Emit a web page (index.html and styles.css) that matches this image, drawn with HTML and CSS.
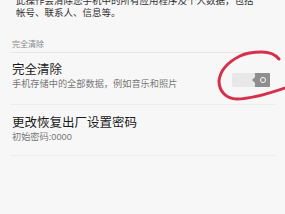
FILE: index.html
```html
<!DOCTYPE html>
<html lang="zh">
<head>
<meta charset="utf-8">
<link rel="stylesheet" href="styles.css">
</head>
<body>
<div class="page">
  <p class="intro">此操作会清除您手机中的所有应用程序及个人数据，包括帐号、联系人、信息等。</p>
  <div class="section-head">完全清除</div>
  <div class="row first">
    <div class="row-text">
      <div class="title">完全清除</div>
      <div class="sub">手机存储中的全部数据，例如音乐和照片</div>
    </div>
    <div class="switch">
      <span class="track"></span>
      <span class="thumb"><span class="dot"></span></span>
    </div>
  </div>
  <div class="row">
    <div class="row-text">
      <div class="title">更改恢复出厂设置密码</div>
      <div class="sub">初始密码:0000</div>
    </div>
  </div>
  <svg class="mark" width="75" height="60" viewBox="0 0 75 60">
    <path d="M69 14 C64 8 58 7 52 7 C44 7 36 8 30 11 C18 17 10 26 9 36 C9 46 16 54 27 54 C40 54 55 50 78 42" fill="none" stroke="#d6304b" stroke-width="3" stroke-linecap="round"/>
  </svg>
</div>
</body>
</html>
```
FILE: styles.css
```css
html, body {
  margin: 0;
  padding: 0;
  background: #f7f7f7;
  overflow: hidden;
}
.page {
  position: relative;
  width: 285px;
  height: 214px;
  font-family: "Liberation Sans", "Noto Sans CJK SC", sans-serif;
  color: #222;
}
.intro {
  margin: -5px 0 0 0;
  padding: 0 29px 0 16px;
  font-size: 9.5px;
  line-height: 12px;
  color: #333;
}
.section-head {
  margin: 21px 10px 0 10px;
  padding: 0 0 2px 2px;
  font-size: 8px;
  line-height: 10px;
  color: #888;
  border-bottom: 1px solid #e6e6e6;
}
.row {
  box-sizing: border-box;
  margin: 0 10px;
  padding: 10px 0 0 2px;
  height: 52px;
  display: flex;
  align-items: flex-start;
  justify-content: space-between;
  border-bottom: 1px solid #ececec;
}
.row + .row {
  padding-top: 11px;
  height: 51px;
}
.title {
  font-size: 12.5px;
  line-height: 15px;
  color: #1a1a1a;
}
.sub {
  font-size: 9.2px;
  line-height: 12px;
  color: #777;
}
.switch {
  display: flex;
  align-items: center;
  margin: 10px 5px 0 0;
}
.track {
  width: 23px;
  height: 14px;
  background: #e8e8e8;
  border-radius: 2px 0 0 2px;
}
.thumb {
  position: relative;
  width: 15px;
  height: 14px;
  background: #8e8e8e;
  border-radius: 0 1px 1px 0;
  display: flex;
  align-items: center;
  justify-content: center;
}
.thumb::before {
  content: "";
  position: absolute;
  left: -3px;
  top: 4px;
  border-top: 3px solid transparent;
  border-bottom: 3px solid transparent;
  border-right: 3px solid #8e8e8e;
}
.dot {
  width: 4px;
  height: 4px;
  border: 1.5px solid #fff;
  border-radius: 50%;
}
.mark {
  position: absolute;
  left: 210px;
  top: 50px;
  overflow: visible;
}
```
